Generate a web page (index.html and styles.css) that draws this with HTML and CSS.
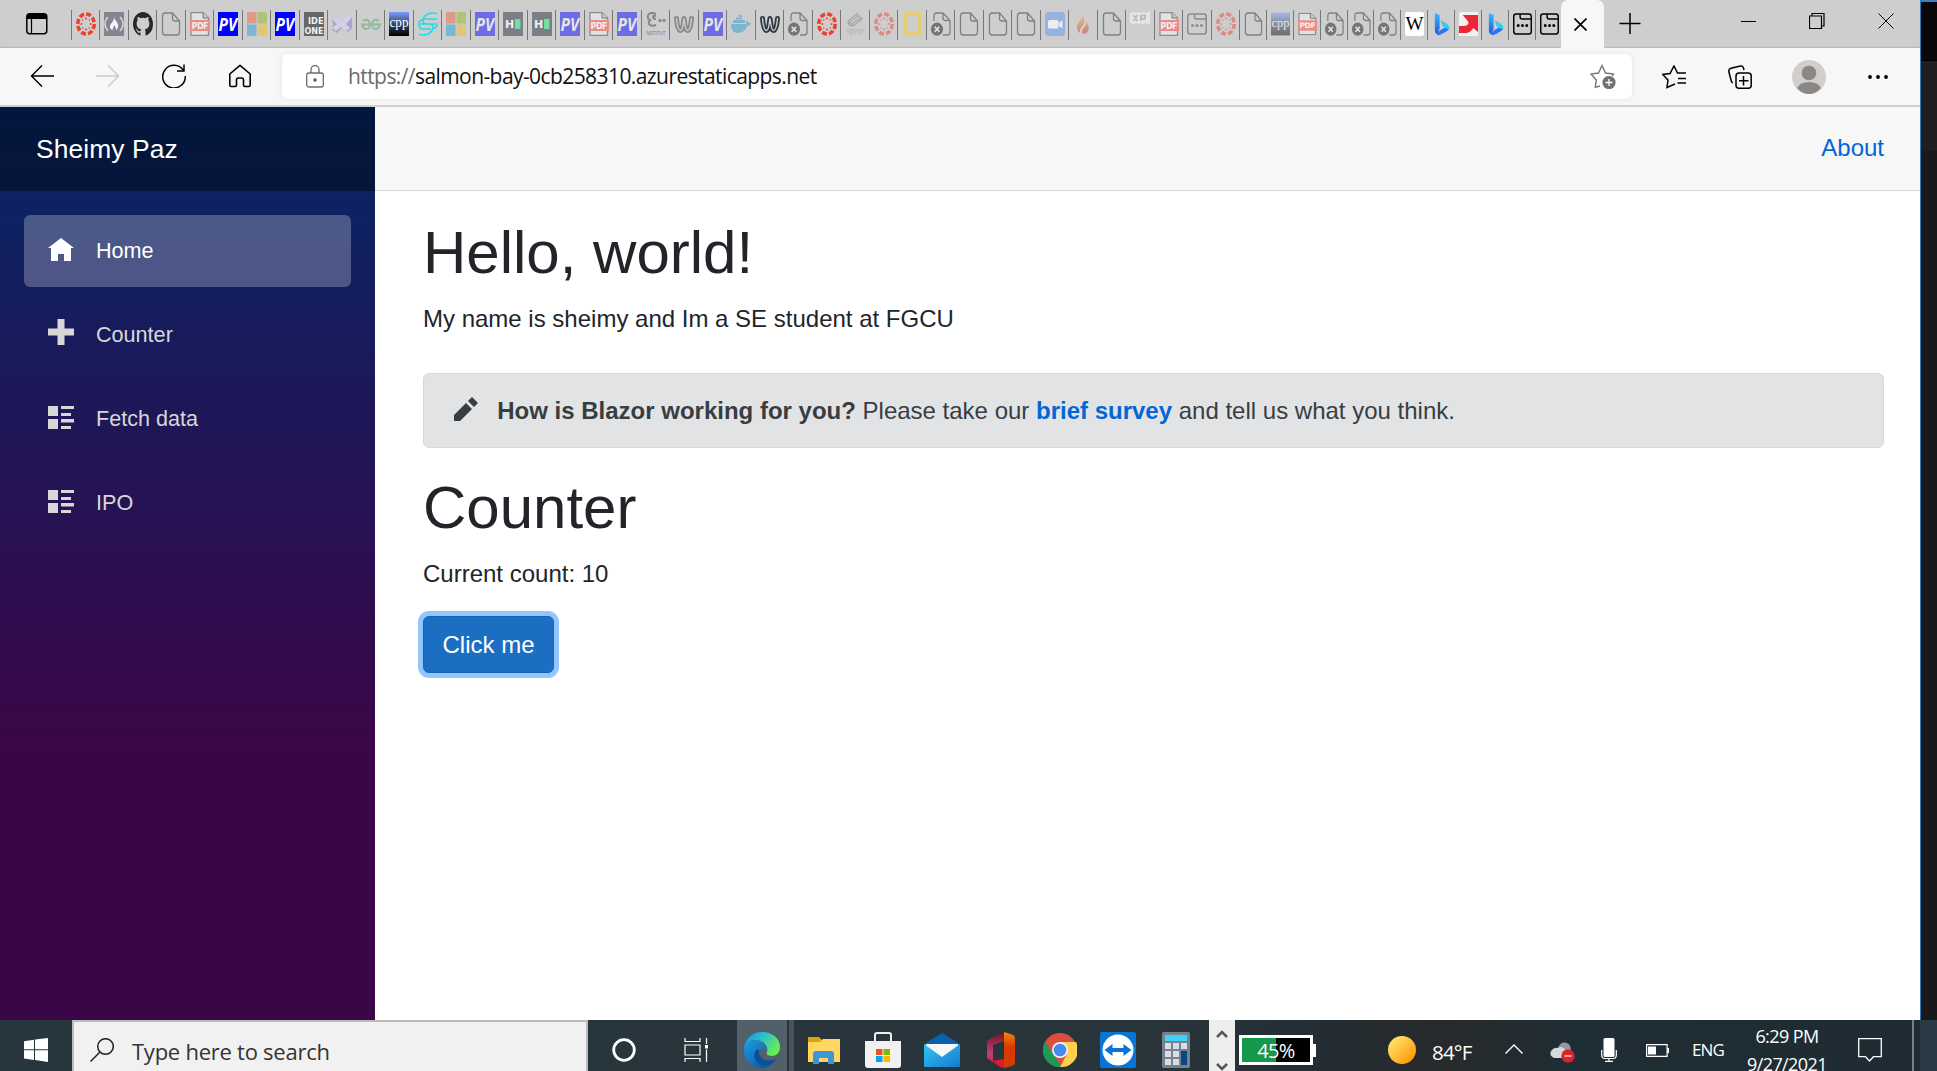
FILE: index.html
```html
<!DOCTYPE html>
<html lang="en">
<head>
<meta charset="utf-8">
<title>Sheimy Paz</title>
<link rel="stylesheet" href="styles.css">
</head>
<body>
<svg class="defs" aria-hidden="true">
  <defs>
    <linearGradient id="g-cpp" x1="0" y1="0" x2="0" y2="1"><stop offset="0" stop-color="#7b9dff"/><stop offset=".5" stop-color="#34466f"/><stop offset="1" stop-color="#000"/></linearGradient>
    <linearGradient id="g-bing" x1="0" y1="0" x2="0" y2="1"><stop offset="0" stop-color="#37bdff"/><stop offset="1" stop-color="#2257e0"/></linearGradient>
    <linearGradient id="g-flame" x1="0" y1="0" x2="0" y2="1"><stop offset="0" stop-color="#ebbd8c"/><stop offset="1" stop-color="#c98578"/></linearGradient>
    <linearGradient id="g-edge" x1="0" y1="0" x2="1" y2=".5"><stop offset="0" stop-color="#168ed8"/><stop offset=".5" stop-color="#2bc0d0"/><stop offset="1" stop-color="#68ec56"/></linearGradient>
    <linearGradient id="g-edge2" x1="0" y1="0" x2="1" y2="1"><stop offset="0" stop-color="#1c9de5"/><stop offset="1" stop-color="#0c4b94"/></linearGradient>
    <linearGradient id="g-mail" x1="0" y1="0" x2="1" y2="1"><stop offset="0" stop-color="#35c6f4"/><stop offset="1" stop-color="#1479d0"/></linearGradient>
    <linearGradient id="g-office" x1="0" y1="0" x2="0" y2="1"><stop offset="0" stop-color="#f58a0b"/><stop offset=".4" stop-color="#d83b01"/></linearGradient>
    <linearGradient id="g-office2" x1="0" y1="0" x2="0" y2="1"><stop offset="0" stop-color="#7c1420"/><stop offset=".7" stop-color="#b8437f"/><stop offset="1" stop-color="#ef1b38"/></linearGradient>
    <linearGradient id="g-sun" x1="0" y1="0" x2="1" y2="1"><stop offset=".1" stop-color="#ffe66e"/><stop offset=".9" stop-color="#ff9500"/></linearGradient>
  </defs>
  <symbol id="canvas" viewBox="0 0 20 24" preserveAspectRatio="none">
    <ellipse cx="10" cy="12" rx="8.2" ry="10" fill="none" stroke="#ee4031" stroke-width="3.6" stroke-dasharray="5 2.15"/>
    <g fill="#ee4031"><circle cx="10" cy="6.5" r="1"/><circle cx="10" cy="17.5" r="1"/><circle cx="5.4" cy="12" r="1"/><circle cx="14.6" cy="12" r="1"/><circle cx="6.7" cy="8" r=".8"/><circle cx="13.3" cy="8" r=".8"/><circle cx="6.7" cy="16" r=".8"/><circle cx="13.3" cy="16" r=".8"/></g>
  </symbol>
  <symbol id="camp" viewBox="0 0 20 24" preserveAspectRatio="none"><path fill="#858591" d="M0 0h20v24H0z"/><path d="M4 5c-4 4-4 10 0 14M16 5c4 4 4 10 0 14" fill="none" stroke="#d5d5dc" stroke-width="1.5"/><path d="M10 5c1 4 5 6 4 10-.4 2-1.600 3-2.500 3 1-2 0-3-1.500-5 0 3-2 3-1 5-2 0-3.500-2-3-4 .5-3 4-4 4-9z" fill="#f4f4f6"/></symbol>
  <symbol id="github" viewBox="0 0 16 16" preserveAspectRatio="none"><path fill="#24292e" d="M8 0C3.580 0 0 3.580 0 8c0 3.540 2.290 6.530 5.470 7.590.4.070.55-.17.55-.38 0-.19-.01-.82-.01-1.490-2.010.37-2.530-.49-2.690-.94-.09-.23-.48-.94-.82-1.130-.28-.15-.68-.52-.01-.53.63-.01 1.080.58 1.230.82.72 1.210 1.870.87 2.330.66.070-.52.28-.87.51-1.070-1.780-.2-3.640-.89-3.640-3.950 0-.87.31-1.590.82-2.150-.08-.2-.36-1.020.08-2.120 0 0 .67-.21 2.200.82a7.600 7.600 0 014 0c1.530-1.040 2.200-.82 2.200-.82.44 1.100.16 1.920.08 2.120.51.56.82 1.270.82 2.150 0 3.070-1.870 3.750-3.650 3.950.29.25.54.73.54 1.480 0 1.070-.01 1.930-.01 2.200 0 .21.15.46.55.38A8.010 8.010 0 0016 8c0-4.420-3.580-8-8-8z"/></symbol>
  <symbol id="file" viewBox="0 0 20 24" preserveAspectRatio="none"><path d="M11.500 1H4Q1.500 1 1.500 4v16q0 3 2.500 3h12q2.500 0 2.500-3V9zM11.500 1v5.500q0 2.500 2.500 2.500h4.500" fill="none" stroke="#808080" stroke-width="1.300"/></symbol>
  <symbol id="filex" viewBox="0 0 20 24" preserveAspectRatio="none"><path d="M3 9V4q0-3 2.500-3H12l7 7.500V20q0 3-2.500 3H12M12 1v5q0 2.500 2.500 2.500H19" fill="none" stroke="#808080" stroke-width="1.300"/><ellipse cx="6" cy="17.200" rx="6" ry="6.600" fill="#757575"/><path d="M3.700 14.700l4.600 5m0-5l-4.600 5" stroke="#e8e8e8" stroke-width="1.500"/></symbol>
  <symbol id="pdf" viewBox="0 0 20 24" preserveAspectRatio="none"><path d="M1 .7h12L18.500 6v17.300H1z" fill="#e2e2e2" stroke="#8c8c8c" stroke-width="1.300"/><path d="M13 .7V6h5.500" fill="#ccc" stroke="#777"/><path d="M0 8h20v11H0z" fill="#e68e8b"/></symbol>
  <symbol id="ms" viewBox="0 0 20 24" preserveAspectRatio="none"><path fill="#df9a87" d="M0 0h9.500v11.500H0z"/><path fill="#adc47b" d="M10.500 0H20v11.500h-9.500z"/><path fill="#78b7d6" d="M0 12.500h9.500V24H0z"/><path fill="#e2c577" d="M10.500 12.500H20V24h-9.500z"/></symbol>
  <symbol id="vs" viewBox="0 0 20 24" preserveAspectRatio="none"><path fill="#a9a6c8" d="M0 7l4-3 6 5 6-7 4 3v11l-4 4-6-4-5 5-5-3 1-5z"/><path fill="#d3d0e6" d="M0 7l4-3 6 5 6-7 4 3-6 7 4 4-4 3-5-4-5 4-4-3 5-4z"/></symbol>
  <symbol id="geeks" viewBox="0 0 20 24" preserveAspectRatio="none"><path d="M0 12.500h20M2 9q2-2 4.500-1c3.500 2 3 9-1 9-3 0-4-2-4-4.500M18 9q-2-2-4.500-1c-3.500 2-3 9 1 9 3 0 4-2 4-4.500" fill="none" stroke="#8dba9a" stroke-width="1.900"/></symbol>
  <symbol id="cyan" viewBox="0 0 20 24" preserveAspectRatio="none"><path d="M19 2C14-.5 6 2 5 8q-.5 4 4 4h10M1 22c5 2.500 13 0 14-6q.5-4-4-4H1M19 7H9Q1 7 1 12t4 5h8M19 12q0 4-5 5" fill="none" stroke="#25dce8" stroke-width="1.600"/></symbol>
  <symbol id="weebly" viewBox="0 0 20 24" preserveAspectRatio="none"><path d="M2.500 6.500C3 12 4 18.500 6.500 18.500S9 12 10 6.500c1 5.500 1 12 3.500 12S17 12 17.500 6.500" fill="none" stroke="currentColor" stroke-width="5" stroke-linecap="round" stroke-linejoin="round"/><path d="M2.500 6.500C3 12 4 18.500 6.500 18.500S9 12 10 6.500c1 5.500 1 12 3.500 12S17 12 17.500 6.500" fill="none" stroke="#cecece" stroke-width="1.400" stroke-linecap="round"/></symbol>
  <symbol id="docker" viewBox="0 0 20 24" preserveAspectRatio="none"><path fill="#7fb3cf" d="M0 12h15q0-3 1-4l2 3h2q-1 3-4 3-2 7-9 7-7 0-7-9zM2 8h12v3H2zM5 5.500h6v2H5zM8 3h3v2H8z"/></symbol>
  <symbol id="yellow" viewBox="0 0 20 24" preserveAspectRatio="none"><path d="M4 2h13v20H4z" fill="none" stroke="#e3ce75" stroke-width="4"/></symbol>
  <symbol id="zoom" viewBox="0 0 20 24" preserveAspectRatio="none"><rect width="20" height="24" rx="4" fill="#95b2e2"/><rect x="3" y="8" width="10.500" height="8.500" rx="1.500" fill="#eee"/><path d="M14 11l3.500-3v8.500L14 14z" fill="#eee"/></symbol>
  <symbol id="flame" viewBox="0 0 20 24" preserveAspectRatio="none"><path fill="url(#g-flame)" d="M9.500 2C10 9 4 9 4 16q0 3 3 5c-1-7 5-7 4-13q0-4-1.500-6zM13 9c2 6-4 5-4 12 4 2 8-2 6.500-7z"/></symbol>
  <symbol id="win" viewBox="0 0 20 24" preserveAspectRatio="none"><rect x=".8" y="2" width="18.400" height="20" rx="2.500" fill="none" stroke="currentColor" stroke-width="1.500"/><path d="M7.500 2v3q0 2 2 2H19" fill="none" stroke="currentColor" stroke-width="1.500"/><g fill="currentColor"><circle cx="5.500" cy="13.500" r="1.500"/><circle cx="10" cy="13.500" r="1.500"/><circle cx="14.500" cy="13.500" r="1.500"/></g></symbol>
  <symbol id="bing" viewBox="0 0 20 24" preserveAspectRatio="none"><path fill="url(#g-bing)" d="M3 1l5 2v14l-3 5q-2-1-2-3z"/><path fill="#2d73f3" d="M4 21l12-7 2 3q-1 2-10 6-2 1-4-2z"/><path fill="#36cbee" d="M9 8l7 4q3 2 2 6l-7-4z"/></symbol>
  <symbol id="red" viewBox="0 0 20 24" preserveAspectRatio="none"><path fill="#f5f1f1" d="M0 0h20v24H0z"/><path d="M4 3h16v17l-5-4Q12 21 7 21H0v-7h5q5 0 5-4z" fill="#ee2537"/></symbol>
  <symbol id="list" viewBox="0 0 26 24"><path d="M0 0h10v10H0zM0 13h10v10H0zM13 0h13v3H13zM13 7h10v3H13zM13 13h13v3.500H13zM13 20h10v3H13z" fill="currentColor"/></symbol>
</svg>

<div class="desktop">
  <div class="browser">
    <header class="titlebar">
      <svg class="tab-actions" viewBox="0 0 22 22"><rect x=".8" y=".8" width="20" height="20" rx="3" fill="none" stroke="#000" stroke-width="1.500"/><path d="M1 3q0-2 3-2h14q3 0 3 2v3H1z"/><path d="M5.500 5v16" stroke="#000" stroke-width="1.200"/></svg>
      <div class="tabs">
        <span class="tab"><svg><use href="#canvas"/></svg></span>
        <span class="tab"><svg><use href="#camp"/></svg></span>
        <span class="tab"><svg><use href="#github"/></svg></span>
        <span class="tab"><svg><use href="#file"/></svg></span>
        <span class="tab"><svg viewBox="0 0 20 24"><use href="#pdf"/><text class="t-pdf" x="1.500" y="16.600" textLength="17">PDF</text></svg></span>
        <span class="tab"><svg class="pv" viewBox="0 0 20 24"><text x=".5" y="18.500" textLength="18.500" lengthAdjust="spacingAndGlyphs">PV</text></svg></span>
        <span class="tab"><svg><use href="#ms"/></svg></span>
        <span class="tab"><svg class="pv" viewBox="0 0 20 24"><text x=".5" y="18.500" textLength="18.500" lengthAdjust="spacingAndGlyphs">PV</text></svg></span>
        <span class="tab"><svg class="ideone" viewBox="0 0 20 24"><text x="4" y="12" textLength="15.500" lengthAdjust="spacingAndGlyphs">IDE</text><text x=".5" y="21.500" textLength="19" lengthAdjust="spacingAndGlyphs">ONE</text></svg></span>
        <span class="tab"><svg><use href="#vs"/></svg></span>
        <span class="tab"><svg><use href="#geeks"/></svg></span>
        <span class="tab"><svg class="cpp" viewBox="0 0 20 24"><path fill="url(#g-cpp)" d="M0 0h20v24H0z"/><text x=".5" y="15" textLength="19" lengthAdjust="spacingAndGlyphs">cpp</text></svg></span>
        <span class="tab"><svg><use href="#cyan"/></svg></span>
        <span class="tab"><svg><use href="#ms"/></svg></span>
        <span class="tab idle"><svg class="pv" viewBox="0 0 20 24"><text x=".5" y="18.500" textLength="18.500" lengthAdjust="spacingAndGlyphs">PV</text></svg></span>
        <span class="tab"><svg class="he" viewBox="0 0 20 24"><text x="2" y="16">H</text><path d="M12 7h5.500v10H12z"/></svg></span>
        <span class="tab"><svg class="he" viewBox="0 0 20 24"><text x="2" y="16">H</text><path d="M12 7h5.500v10H12z"/></svg></span>
        <span class="tab idle"><svg class="pv" viewBox="0 0 20 24"><text x=".5" y="18.500" textLength="18.500" lengthAdjust="spacingAndGlyphs">PV</text></svg></span>
        <span class="tab"><svg viewBox="0 0 20 24"><use href="#pdf"/><text class="t-pdf" x="1.500" y="16.600" textLength="17">PDF</text></svg></span>
        <span class="tab idle"><svg class="pv" viewBox="0 0 20 24"><text x=".5" y="18.500" textLength="18.500" lengthAdjust="spacingAndGlyphs">PV</text></svg></span>
        <span class="tab"><svg class="inst" viewBox="0 0 20 24"><path d="M10 2C4-1 1 3 2 6q.5 2 3 2-3 1-2 4 2 3 7 1M10 4q-3-1-3 1t3 2M12.500 8.500h3m1 0h3M14 7v3m4-3v3"/><text x=".5" y="23" textLength="19" lengthAdjust="spacingAndGlyphs">NSTITUT</text></svg></span>
        <span class="tab muted"><svg><use href="#weebly"/></svg></span>
        <span class="tab idle"><svg class="pv" viewBox="0 0 20 24"><text x=".5" y="18.500" textLength="18.500" lengthAdjust="spacingAndGlyphs">PV</text></svg></span>
        <span class="tab"><svg><use href="#docker"/></svg></span>
        <span class="tab slate"><svg><use href="#weebly"/></svg></span>
        <span class="tab"><svg><use href="#filex"/></svg></span>
        <span class="tab"><svg><use href="#canvas"/></svg></span>
        <span class="tab"><svg class="hand" viewBox="0 0 20 24"><path d="M3 9l9-7 5 5-9 7zM5 10l8-6M7 12l8-6M3 9l1 4 4 1"/><text x=".5" y="20.500" textLength="19" lengthAdjust="spacingAndGlyphs">nigiyigh</text></svg></span>
        <span class="tab idle"><svg><use href="#canvas"/></svg></span>
        <span class="tab"><svg><use href="#yellow"/></svg></span>
        <span class="tab"><svg><use href="#filex"/></svg></span>
        <span class="tab"><svg><use href="#file"/></svg></span>
        <span class="tab"><svg><use href="#file"/></svg></span>
        <span class="tab"><svg><use href="#file"/></svg></span>
        <span class="tab"><svg><use href="#zoom"/></svg></span>
        <span class="tab"><svg><use href="#flame"/></svg></span>
        <span class="tab"><svg><use href="#file"/></svg></span>
        <span class="tab"><svg viewBox="0 0 20 24"><path fill="#e5e5e5" d="M0 0h20v12H0z"/><path d="M3.500 3l4 6m0-6l-4 6M11 9V3.500h4V7h-3" fill="none" stroke="#bdbdbd" stroke-width="2"/><path d="M0 .5h20M0 11.500h20" stroke="#cecece" stroke-dasharray="2 3"/></svg></span>
        <span class="tab"><svg viewBox="0 0 20 24"><use href="#pdf"/><text class="t-pdf" x="1.500" y="16.600" textLength="17">PDF</text></svg></span>
        <span class="tab muted"><svg><use href="#win"/></svg></span>
        <span class="tab idle"><svg><use href="#canvas"/></svg></span>
        <span class="tab slim"><svg><use href="#file"/></svg></span>
        <span class="tab slim idle"><svg class="cpp" viewBox="0 0 20 24"><path fill="url(#g-cpp)" d="M0 0h20v24H0z"/><text x=".5" y="15" textLength="19" lengthAdjust="spacingAndGlyphs">cpp</text></svg></span>
        <span class="tab slim"><svg viewBox="0 0 20 24"><use href="#pdf"/><text class="t-pdf" x="1.500" y="16.600" textLength="17">PDF</text></svg></span>
        <span class="tab slim"><svg><use href="#filex"/></svg></span>
        <span class="tab slim"><svg><use href="#filex"/></svg></span>
        <span class="tab slim"><svg><use href="#filex"/></svg></span>
        <span class="tab slim"><svg class="wiki" viewBox="0 0 20 24"><text x=".5" y="18.500" textLength="19" lengthAdjust="spacingAndGlyphs">W</text></svg></span>
        <span class="tab slim"><svg><use href="#bing"/></svg></span>
        <span class="tab slim"><svg><use href="#red"/></svg></span>
        <span class="tab slim"><svg><use href="#bing"/></svg></span>
        <span class="tab slim"><svg><use href="#win"/></svg></span>
        <span class="tab slim"><svg><use href="#win"/></svg></span>
      </div>
      <div class="active-tab"><svg width="13" height="13" viewBox="0 0 13 13"><path d="M.5.5l12 12m0-12l-12 12" stroke="#000" stroke-width="1.700"/></svg></div>
      <svg class="new-tab" width="22" height="22" viewBox="0 0 22 22"><path d="M11 0v21M.5 10.500h21" stroke="#000" stroke-width="1.500"/></svg>
      <div class="controls">
        <svg width="16" height="16" viewBox="0 0 16 16"><path d="M0 8.500h15" stroke="#000"/></svg>
        <svg width="16" height="16" viewBox="0 0 16 16"><path d="M.5 3h12v12.500H.5zM3 3V.5h12V13h-2.500" fill="none" stroke="#000" stroke-width="1.200"/></svg>
        <svg width="16" height="16" viewBox="0 0 16 16"><path d="M.5.500l15 15m0-15l-15 15" stroke="#000"/></svg>
      </div>
    </header>

    <div class="toolbar">
      <div class="nav-buttons">
        <svg viewBox="0 0 24 24"><path d="M12 1.500L1.500 12 12 22.500M1.500 12H24" fill="none" stroke="#000" stroke-width="1.500"/></svg>
        <svg viewBox="0 0 24 24"><path d="M12 1.500L22.500 12 12 22.500M22.500 12H0" fill="none" stroke="#ccc" stroke-width="1.500"/></svg>
        <svg viewBox="0 0 24 24"><path d="M21.500 6.500A11.300 11.300 0 1 0 23.300 12M22 .5v6.500h-7" fill="none" stroke="#000" stroke-width="1.500"/></svg>
        <svg viewBox="0 0 24 24"><path d="M12 1.300L22.200 10v11q0 1.500-1.500 1.500H17q-1.500 0-1.500-1.500v-5q0-2-2-2h-3q-2 0-2 2v5q0 1.500-1.500 1.500H3.300q-1.500 0-1.500-1.500V10z" fill="none" stroke="#000" stroke-width="1.600" stroke-linejoin="round"/></svg>
      </div>
      <div class="address">
        <svg width="18" height="23" viewBox="0 0 18 23"><rect x=".7" y="8" width="16.600" height="14" rx="2" fill="none" stroke="#6c6c6c" stroke-width="1.300"/><path d="M5 8V4.500a4 4 0 0 1 8 0V8" fill="none" stroke="#6c6c6c" stroke-width="1.300"/><circle cx="9" cy="15" r="1.700" fill="#555"/></svg>
        <span class="url"><span class="scheme">https://</span>salmon-bay-0cb258310.azurestaticapps.net</span>
        <svg class="add-fav" width="27" height="26" viewBox="0 0 27 26"><path d="M10 22l-4.700 1.300 1-7.300L1 10l7.500-1L12 1.500 15.500 9l8 1-1.500 2" fill="none" stroke="#777" stroke-width="1.400"/><circle cx="19" cy="18.500" r="6.600" fill="#707070"/><path d="M19 15v7m-3.500-3.500h7" stroke="#fff" stroke-width="1.300"/></svg>
      </div>
      <div class="actions">
        <svg width="24" height="24" viewBox="0 0 24 24"><path d="M13 19l-8 3.500 1-7.500L.7 9.500 8 8.500 12 1l3.500 7H24M16 13.500h8M15.500 18h8.500" fill="none" stroke="#000" stroke-width="1.500"/></svg>
        <svg width="24" height="24" viewBox="0 0 24 24"><rect x="8" y="8" width="15.200" height="15.200" rx="3" fill="none" stroke="#000" stroke-width="1.500"/><path d="M15.500 11v9.500M11 15.700h9.500M5 17.500Q3.500 18 3 15L.8 6.500Q.5 4 3 3.300L12.500 1q2.500-.5 3 2l.5 2" fill="none" stroke="#000" stroke-width="1.500"/></svg>
        <svg width="34" height="34" viewBox="0 0 34 34"><circle cx="17" cy="17" r="17" fill="#d0cfcd"/><circle cx="17" cy="13" r="7.300" fill="#8b8785"/><path d="M5 28q3-6 12-6t12 6q-5 6-12 6T5 28z" fill="#8b8785"/></svg>
        <svg width="20" height="6" viewBox="0 0 20 6"><circle cx="2" cy="3" r="1.900"/><circle cx="10" cy="3" r="1.900"/><circle cx="18" cy="3" r="1.900"/></svg>
      </div>
    </div>

    <div class="page">
      <aside class="sidebar">
        <div class="brand">Sheimy Paz</div>
        <nav class="menu">
          <a class="menu-item active"><svg viewBox="0 0 26 24"><path d="M13 0l13 10h-3v13h-7v-7h-6v7H3V10H0z" fill="currentColor"/></svg>Home</a>
          <a class="menu-item"><svg class="plus" viewBox="0 0 26 26"><path d="M9.500 0h7v9.500H26v7h-9.500V26h-7v-9.500H0v-7h9.500z" fill="currentColor"/></svg>Counter</a>
          <a class="menu-item"><svg viewBox="0 0 26 24"><use href="#list"/></svg>Fetch data</a>
          <a class="menu-item"><svg viewBox="0 0 26 24"><use href="#list"/></svg>IPO</a>
        </nav>
      </aside>
      <main class="main">
        <div class="top-row"><a>About</a></div>
        <section class="content">
          <h1>Hello, world!</h1>
          <p class="intro">My name is sheimy and Im a SE student at FGCU</p>
          <div class="alert"><svg width="24" height="24" viewBox="0 0 24 24"><path d="M0 24v-6L12 6l6 6L6 24zM14 4l4-4 6 6-4 4z" fill="#383d41"/></svg><p><strong>How is Blazor working for you?</strong> Please take our <a>brief survey</a> and tell us what you think.</p></div>
          <h1>Counter</h1>
          <p>Current count: 10</p>
          <button class="btn" type="button">Click me</button>
        </section>
      </main>
    </div>
  </div>
  <div class="behind"><div class="behind-top"></div><div class="behind-mid"></div></div>

  <footer class="taskbar">
    <div class="start"><svg width="24" height="24" viewBox="0 0 24 24"><path fill="#fff" d="M0 3.200L10 1.700v9.500H0zM11 1.500L24 0v11.200H11zM0 12.300h10v9.600L0 20.500zM11 12.300h13V24l-13-2z"/></svg></div>
    <div class="search"><svg width="24" height="24" viewBox="0 0 24 24"><circle cx="15.500" cy="8.500" r="7.800" fill="none" stroke="#222" stroke-width="1.500"/><path d="M10 14L.5 23.500" stroke="#222" stroke-width="1.500"/></svg><span>Type here to search</span></div>
    <div class="task"><svg width="24" height="24" viewBox="0 0 24 24"><circle cx="12" cy="12" r="10.300" fill="none" stroke="#fff" stroke-width="2.800"/></svg></div>
    <div class="task"><svg width="25" height="24" viewBox="0 0 25 24"><path d="M1 0v3.500h15V0M1 24v-3.500h15V24M1 7h15v10H1zM22.500 0v24" fill="none" stroke="#fff" stroke-width="1.200"/><path d="M20.500 6.500h4V11h-4z" fill="#fff" stroke="#27353d"/></svg></div>
    <div class="task current"><svg width="36" height="36" viewBox="0 0 36 36"><path fill="url(#g-edge2)" d="M0 18C1 9 9 7 15 9c6 2 8 7 8 10-2-3-8-4-8 2 0 7 10 10 17 6-4 7-10 9-14 9C8 36 0 29 0 18z"/><path fill="url(#g-edge)" d="M0 17C1 6 9 0 18 0c11 0 18 7 18 15 0 6-4 9-8 9-5 0-6-2-5-4 2-7-5-12-12-12C5 8 1 12 0 17z"/><path fill="#0d4f99" d="M13 17q-5 5-1 12c5 7 13 5 20-2-9 4-17 0-17-7 0-2 0-2-2-3z"/></svg></div>
    <div class="stack"></div>
    <div class="app"><svg width="32" height="27" viewBox="0 0 32 27"><path fill="#dfa20c" d="M0 0h11l3 3v4H0z"/><path fill="#ffd661" d="M0 5h12l3-3h17v23H0z"/><path fill="#3c95d8" d="M5 17q0-3 3-3h15q3 0 3 3v10h-6v-6h-9v6H5z"/></svg></div>
    <div class="app"><svg width="36" height="36" viewBox="0 0 36 36"><path d="M10 12V3q0-2 2-2h12q2 0 2 2v9" fill="none" stroke="#eee" stroke-width="2"/><path d="M0 9h36v24q0 3-3 3H3q-3 0-3-3z" fill="#f1f1f1"/><path fill="#f25022" d="M11 17h6.500v6H11z"/><path fill="#7fba00" d="M18.500 17H25v6h-6.500z"/><path fill="#00a4ef" d="M11 24h6.500v6H11z"/><path fill="#ffb900" d="M18.500 24H25v6h-6.500z"/></svg></div>
    <div class="app"><svg width="36" height="34" viewBox="0 0 36 34"><path fill="#0861ad" d="M0 11L18 0l18 11v8H0z"/><path fill="#f7f7f7" d="M2 11h32v6L18 25 2 17z"/><path fill="url(#g-mail)" d="M0 11l18 13 18-13v23H0z"/></svg></div>
    <div class="app"><svg width="28" height="36" viewBox="0 0 28 36"><path fill="url(#g-office2)" d="M17 1L4 6Q0 8 0 12v14l6 4V13l11-4z"/><path fill="url(#g-office)" d="M17 0l8 2.500q3 1 3 4V30q0 3-3 4l-8 2z"/><path fill="#e3182d" d="M5 29l12-2v9l-4-1z"/></svg></div>
    <div class="app"><svg width="34" height="34" viewBox="0 0 34 34"><circle cx="17" cy="17" r="17" fill="#dd4d40"/><path fill="#1a9a55" d="M2 8.700L10 21l9 12.900A17 17 0 0 1 2 8.700z"/><path fill="#ffd04c" d="M17 9h16a17 17 0 0 1-16 25l7-13z"/><circle cx="17" cy="17" r="8" fill="#f2f2f2"/><circle cx="17" cy="17" r="6.300" fill="#4688f2"/></svg></div>
    <div class="app"><svg width="36" height="36" viewBox="0 0 36 36"><rect width="36" height="36" rx="2" fill="#0874d8"/><circle cx="18" cy="18" r="15.500" fill="#fff"/><path fill="#0874d8" d="M4.500 18l8-6v4h11v-4l8 6-8 6v-4h-11v4z"/></svg></div>
    <div class="app calc"><svg width="28" height="36" viewBox="0 0 28 36"><rect width="28" height="36" rx="2" fill="#77838c"/><path fill="#3fd3fa" d="M3 3h22v6H3z"/><path fill="#d8dde6" d="M3 11h6v6H3zM11 11h6v6h-6zM19 11h6v6h-6zM3 19h6v6H3zM11 19h6v6h-6zM3 27h6v6H3zM11 27h6v6h-6z"/><path fill="#0b4783" d="M19 19h6v14h-6z"/></svg></div>
    <div class="scroller"><svg width="12" height="8" viewBox="0 0 12 8"><path d="M1 7l5-5 5 5" fill="none" stroke="#555" stroke-width="2.500"/></svg><svg width="12" height="8" viewBox="0 0 12 8"><path d="M1 1l5 5 5-5" fill="none" stroke="#555" stroke-width="2.500"/></svg></div>
    <div class="meter">45%</div>
    <div class="meter-cap"></div>
    <svg class="sun" width="28" height="28" viewBox="0 0 28 28"><circle cx="14" cy="14" r="14" fill="url(#g-sun)"/></svg>
    <span class="temp">84°F</span>
    <svg class="chevron" width="18" height="10" viewBox="0 0 18 10"><path d="M.5 9.500L9 1l8.500 8.500" fill="none" stroke="#fff" stroke-width="1.400"/></svg>
    <svg class="cloud" width="25" height="22" viewBox="0 0 25 22"><path d="M8 6q3-7 9-5 4 2 4 8l-8 5z" fill="#929a9f"/><path d="M4 16q-5-2-3-7 3-4 7-3 4-3 8 3 5 3 2 7z" fill="#d6d8da"/><circle cx="18" cy="14" r="6.700" fill="#d8232c"/><path d="M14.500 14h7" stroke="#fff" stroke-width="1.200"/></svg>
    <svg class="mic" width="16" height="24" viewBox="0 0 16 24"><rect x="2.500" width="11" height="19" rx="1.500" fill="#fff"/><path d="M.7 12v5q0 3.500 3 3.500h8.600q3 0 3-3.500v-5M8 20v3.300M4 23.300h8" fill="none" stroke="#fff" stroke-width="1.200"/></svg>
    <svg class="power" width="23" height="13" viewBox="0 0 23 13"><path d="M.6.600h20.500v11.800H.6zM22.400 4v5" fill="none" stroke="#fff" stroke-width="1.200"/><path d="M2 2.500h8v8H2z" fill="#fff"/></svg>
    <span class="lang">ENG</span>
    <div class="clock"><span>6:29 PM</span><span>9/27/2021</span></div>
    <svg class="notice" width="24" height="24" viewBox="0 0 24 24"><path d="M.7.700h22.600v18H15.500L11.500 23l-4-4.300H.7z" fill="none" stroke="#fff" stroke-width="1.300"/></svg>
    <div class="peek"></div>
  </footer>
</div>
</body>
</html>
```

FILE: styles.css
```css
* { box-sizing: border-box; }
body { margin: 0; width: 1937px; height: 1071px; overflow: hidden; font-family: "Liberation Sans", Arial, sans-serif; }
svg { display: block; flex: none; }
.defs { position: absolute; width: 0; height: 0; }

.desktop { display: grid; grid-template: 1020px 51px / 1920px 17px; }
.browser { display: flex; flex-direction: column; background: #f7f7f7; min-width: 0; }

/* Title bar and tabs */
.titlebar { display: flex; height: 48px; background: #cecece; box-shadow: inset 0 -1px 1px #b9b9b9; }
.tab-actions { width: 22px; height: 22px; margin: 13px 23px 0 25.500px; }
.tabs { display: flex; width: 1490.5px; }
.tab { flex: none; width: 28.5px; height: 30px; margin-top: 10px; padding: 2px 0 0 4px; border-left: 1.5px solid #777; color: #000; }
.tab svg { width: 20px; height: 24px; }
.tab.slim { width: 26.900px; }
.tab.slim svg { width: 19px; }
.idle svg { opacity: .47; }
.tab.muted { color: #8a8a8a; }
.tab.slate { color: #303b45; }

/* Lettered site icons */
.t-pdf { font: bold 8px "DejaVu Sans", sans-serif; fill: #f6f0f0; }
.pv { background: #00f; font: italic bold 17px "Open Sans", sans-serif; fill: #fff; }
.ideone { background: #676767; font: bold 9.5px "DejaVu Sans", sans-serif; fill: #f1f1f1; }
.cpp text { font: 14px "Liberation Serif", serif; fill: #fff; }
.he { background: #7b7e86; font: bold 11px "DejaVu Sans", sans-serif; fill: #f1f1f1; }
.he path { fill: #74dfa0; }
.inst { font: 5px "Liberation Sans", sans-serif; fill: #777; }
.inst path { fill: none; stroke: #888; stroke-width: 2; }
.hand { font: 7px "Liberation Sans", sans-serif; fill: #b0b0b0; }
.hand path { fill: none; stroke: #aaa; stroke-width: 1.5; }
.wiki { background: #fff; border-radius: 2px; font: 20px "Liberation Serif", serif; }

.active-tab { width: 43px; padding: 18px 0 0 12.500px; background: #f7f7f7; border-radius: 7px 7px 0 0; }
.new-tab { margin: 13px 0 0 14.500px; }
.controls { display: flex; gap: 52.5px; margin: 13px 0 0 100px; }

/* Toolbar */
.toolbar { display: flex; align-items: flex-start; height: 59px; border-bottom: 2px solid #cfcfcf; }
.nav-buttons { display: flex; gap: 42px; padding: 16px 30px 0 30px; }
.nav-buttons svg { width: 24px; height: 24px; }
.address { display: flex; align-items: center; width: 1350px; height: 45px; margin-top: 6px; padding: 0 15px 0 24px; background: #fff; border-radius: 6px; box-shadow: 0 0 5px #e3e3e3; }
.url { margin: -2px 0 0 24px; font: 21px/30px "Open Sans", sans-serif; letter-spacing: -.58px; white-space: nowrap; color: #111; }
.scheme { color: #6c6c6c; }
.add-fav { margin-left: auto; }
.actions { display: flex; align-items: center; height: 57px; padding-left: 30px; gap: 42px; }
.actions svg:nth-child(3) { margin-left: -2px; }

/* Blazor page */
.page { display: flex; flex: 1; min-height: 0; }
.sidebar { width: 375px; background: linear-gradient(180deg, #052767 0%, #3a0647 70%); }
.brand { height: 84px; padding-left: 36px; background: rgba(0, 0, 0, .4); color: #fff; font-size: 26.4px; line-height: 84px; letter-spacing: .1px; }
.menu { display: flex; flex-direction: column; gap: 12px; padding: 24px; }
.menu-item { display: flex; align-items: center; height: 72px; padding: 0 0 1px 24px; gap: 22px; border-radius: 6px; color: #d7d7d7; font-size: 21.600px; }
.menu-item svg { width: 26px; height: 24px; margin-top: -1px; }
.menu-item .plus { height: 26px; margin-top: -5px; }
.menu-item.active { background: rgba(255, 255, 255, .25); color: #fff; }
.main { flex: 1; background: #fff; color: #212529; font-size: 24px; line-height: 36px; }
.top-row { display: flex; justify-content: flex-end; align-items: center; height: 84px; padding: 0 36px 2px 0; background: #f7f7f7; border-bottom: 1px solid #d6d5d5; }
.main a { color: #0366d6; }
.content { padding: 26.400px 36px 0 48px; }
h1 { margin: 0 0 12px; font-size: 60px; font-weight: 400; line-height: 72px; }
p { margin: 0 0 24px; }
.intro { margin-bottom: 36px; }
.alert { display: flex; align-items: center; gap: 19.200px; height: 75px; margin-bottom: 24px; padding: 0 30px; background: #e2e3e5; border: 1px solid #d6d8db; border-radius: 6px; color: #383d41; }
.alert svg { margin-top: -4px; }
.alert p { margin: 0; }
.alert a { font-weight: 700; }
.btn { display: block; width: 131px; height: 57px; padding: 0; border: 1px solid #1861ac; border-radius: 6px; background: #1b6ec2; color: #fff; font: inherit; box-shadow: 0 0 0 5px #93c5ff; }

/* Window behind the browser */
.behind { display: flex; flex-direction: column; background: #191919; border-left: 1px solid #3478b8; border-top: 2px solid #397fc5; }
.behind-top { height: 59px; background: #080808; border-bottom: 1px solid #000; }
.behind-mid { height: 90px; background: #1f1f1f; }

/* Taskbar */
.taskbar { grid-column: 1 / 3; display: flex; overflow: hidden; background: linear-gradient(90deg, #27363e 0, #28343a 1180px, #232d33 1320px, #272a2b 1440px, #1f2d35 1580px, #1e2b32 1937px); color: #fff; font-family: "Open Sans", sans-serif; white-space: nowrap; }
.taskbar > * { flex: none; }
.start { width: 72px; padding: 18px 24px; }
.search { display: flex; width: 516px; height: 60px; padding: 16px 0 0 16px; gap: 18px; background: #f1f1f1; border: 2px solid #bcbcbc; color: #333; font-size: 22px; }
.search span { line-height: 30px; margin-top: -2px; letter-spacing: -.25px; }
.task { display: flex; justify-content: center; width: 72px; padding-top: 18px; }
.task.current { width: 50px; margin-left: 5px; padding-top: 12px; background: #52606a; }
.stack { width: 5px; margin: 0 1px 0 2px; background: #46535b; }
.app { display: flex; justify-content: center; align-items: center; width: 58.800px; height: 60px; }
.app.calc { width: 61.200px; padding-right: 4px; }
.scroller { display: flex; flex-direction: column; align-items: center; gap: 25px; width: 26px; padding-top: 10px; background: #eee; }
.meter { width: 74px; height: 30px; margin: 15px 0 0 4px; border: 3px solid #fff; background: linear-gradient(90deg, #16984b 34px, #000 34px); font-size: 20px; line-height: 26px; text-align: center; letter-spacing: -.6px; }
.meter-cap { width: 3px; height: 13px; margin-top: 24px; background: #fff; }
.sun { margin: 16px 0 0 72px; }
.temp { width: 73px; margin-top: 18px; padding-left: 16px; font-size: 20.500px; line-height: 28px; letter-spacing: -.8px; }
.chevron { margin-top: 24px; margin-left: 16px; }
.cloud { margin: 22px 0 0 27px; }
.mic { margin: 18px 0 0 26px; }
.power { margin: 24px 0 0 29px; }
.lang { width: 34px; margin: 17px 0 0 23px; font-size: 17px; line-height: 26px; letter-spacing: -.8px; }
.clock { display: flex; flex-direction: column; align-items: center; width: 86px; margin: 2px 0 0 18px; font-size: 18px; line-height: 28px; letter-spacing: -.6px; }
.notice { margin: 18px 0 0 28px; }
.peek { width: 25px; margin-left: 30px; border-left: 2px solid #7a8185; background: linear-gradient(90deg, transparent 6px, #293a44 6px); }
```
